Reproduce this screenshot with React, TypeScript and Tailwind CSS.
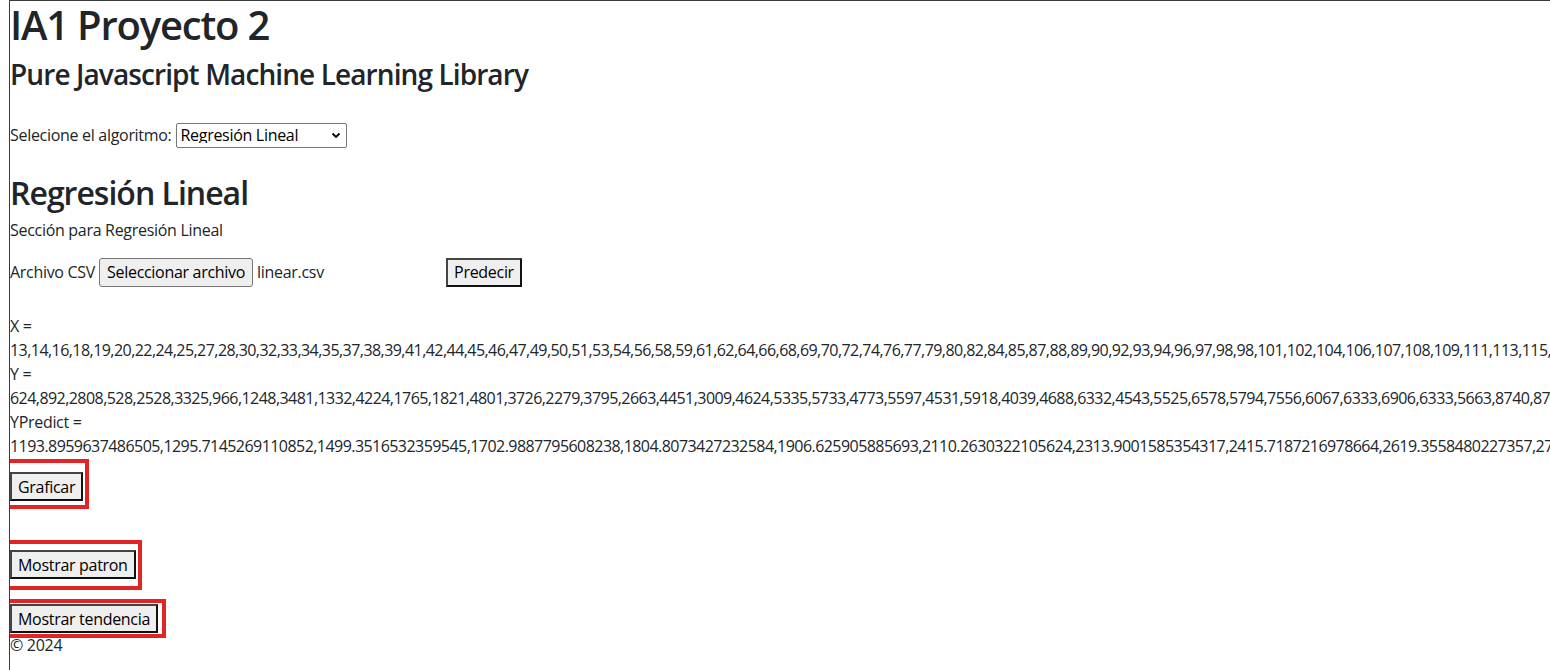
import { useState } from "react"

const xs =
  "13,14,16,18,19,20,22,24,25,27,28,30,32,33,34,35,37,38,39,41,42,44,45,46,47,49,50,51,53,54,56,58,59,61,62,64,66,68,69,70,72,74,76,77,79,80,82,84,85,87,88,89,90,92,93,94,96,97,98,98,101,102,104,106,107,108,109,111,113,115,116,118,120,121,123,125"
const ys =
  "624,892,2808,528,2528,3325,966,1248,3481,1332,4224,1765,1821,4801,3726,2279,3795,2663,4451,3009,4624,5335,5733,4773,5597,4531,5918,4039,4688,6332,4543,5525,6578,5794,7556,6067,6333,6906,6333,5663,8740,8741,7981,9202,8550,9864"
const yPredict =
  "1193.8959637486505,1295.7145269110852,1499.3516532359545,1702.9887795608238,1804.8073427232584,1906.625905885693,2110.2630322105624,2313.9001585354317,2415.7187216978664,2619.3558480227357,2721.1744111851704,2924.8115375100397,3128.448663834909"

function Marked({ children, box }: { children: React.ReactNode; box: string }) {
  // red annotation frame drawn over the button
  return (
    <div className="relative w-fit">
      {children}
      <span className={`pointer-events-none absolute border-4 border-[#e42424] ${box}`} />
    </div>
  )
}

const btn =
  "h-[29px] border-2 border-[#111] border-t-[#444] border-l-[#444] bg-[#efefef] px-[6px] text-[16px] leading-none tracking-[-0.3px] text-black"

export default function App() {
  const [algo, setAlgo] = useState("lineal")

  return (
    <div
      className="ml-[9px] min-h-[670px] overflow-hidden border-l border-t border-[#3b3b3b] bg-white text-[16px] leading-[24px] tracking-[-0.3px] text-[#212529]"
      style={{ fontFamily: '"Open Sans", "Noto Sans", sans-serif' }}
    >
      <h1 className="mb-[9px] text-[40px] font-semibold leading-[48px] tracking-[-1.2px]">IA1 Proyecto 2</h1>
      <h3 className="text-[28px] font-semibold leading-[33.6px] tracking-[-0.9px]">
        Pure Javascript Machine Learning Library
      </h3>

      <div className="mt-[31px] flex items-center gap-[4px]">
        <label htmlFor="algo">Selecione el algoritmo:</label>
        <div className="relative">
          <select
            id="algo"
            value={algo}
            onChange={(e) => setAlgo(e.target.value)}
            className="h-[25px] w-[171px] appearance-none rounded-[2px] border border-[#767676] bg-white pl-[4px] text-[16px] leading-none tracking-[-0.3px] text-black"
          >
            <option value="lineal">Regresión Lineal</option>
            <option value="polinomial">Regresión Polinomial</option>
            <option value="arbol">Árbol de Decisión</option>
          </select>
          <svg
            className="pointer-events-none absolute right-[6px] top-[8px] h-[9px] w-[10px]"
            viewBox="0 0 10 9"
            fill="none"
          >
            <path d="M1.5 2.5 5 6l3.5-3.5" stroke="#000" strokeWidth="1.8" />
          </svg>
        </div>
      </div>

      <h2 className="mt-[26px] mb-[6px] text-[32px] font-semibold leading-[38.4px] tracking-[-1px]">
        Regresión Lineal
      </h2>
      <p className="mb-[15px]">Sección para Regresión Lineal</p>

      <div className="flex h-[30px] items-center">
        <span className="mr-[4px]">Archivo CSV</span>
        <button className="h-[29px] rounded-[3px] border border-[#767676] bg-[#efefef] px-[7px] text-[16px] leading-none tracking-[-0.3px] text-black">
          Seleccionar archivo
        </button>
        <span className="ml-[4px] w-[189px]">linear.csv</span>
        <button className={btn}>Predecir</button>
      </div>

      <div className="mt-[27px] whitespace-nowrap">
        <div>X =</div>
        <div className="tracking-[-0.55px]">{xs}</div>
        <div>Y =</div>
        <div className="tracking-[-0.55px]">{ys}</div>
        <div>YPredict =</div>
        <div className="tracking-[-0.55px]">{yPredict}</div>
      </div>

      <div className="mt-[14px]">
        <Marked box="-left-[6px] -right-[6px] -top-[13px] -bottom-[8px]">
          <button className={btn}>Graficar</button>
        </Marked>
      </div>

      <div className="mt-[49px]">
        <Marked box="-left-[8px] -right-[6px] -top-[10px] -bottom-[11px]">
          <button className={btn}>Mostrar patron</button>
        </Marked>
      </div>

      <div className="mt-[25px]">
        <Marked box="-left-[9px] -right-[8px] -top-[5px] -bottom-[5px]">
          <button className={btn}>Mostrar tendencia</button>
        </Marked>
      </div>

      <footer>© 2024</footer>
    </div>
  )
}
